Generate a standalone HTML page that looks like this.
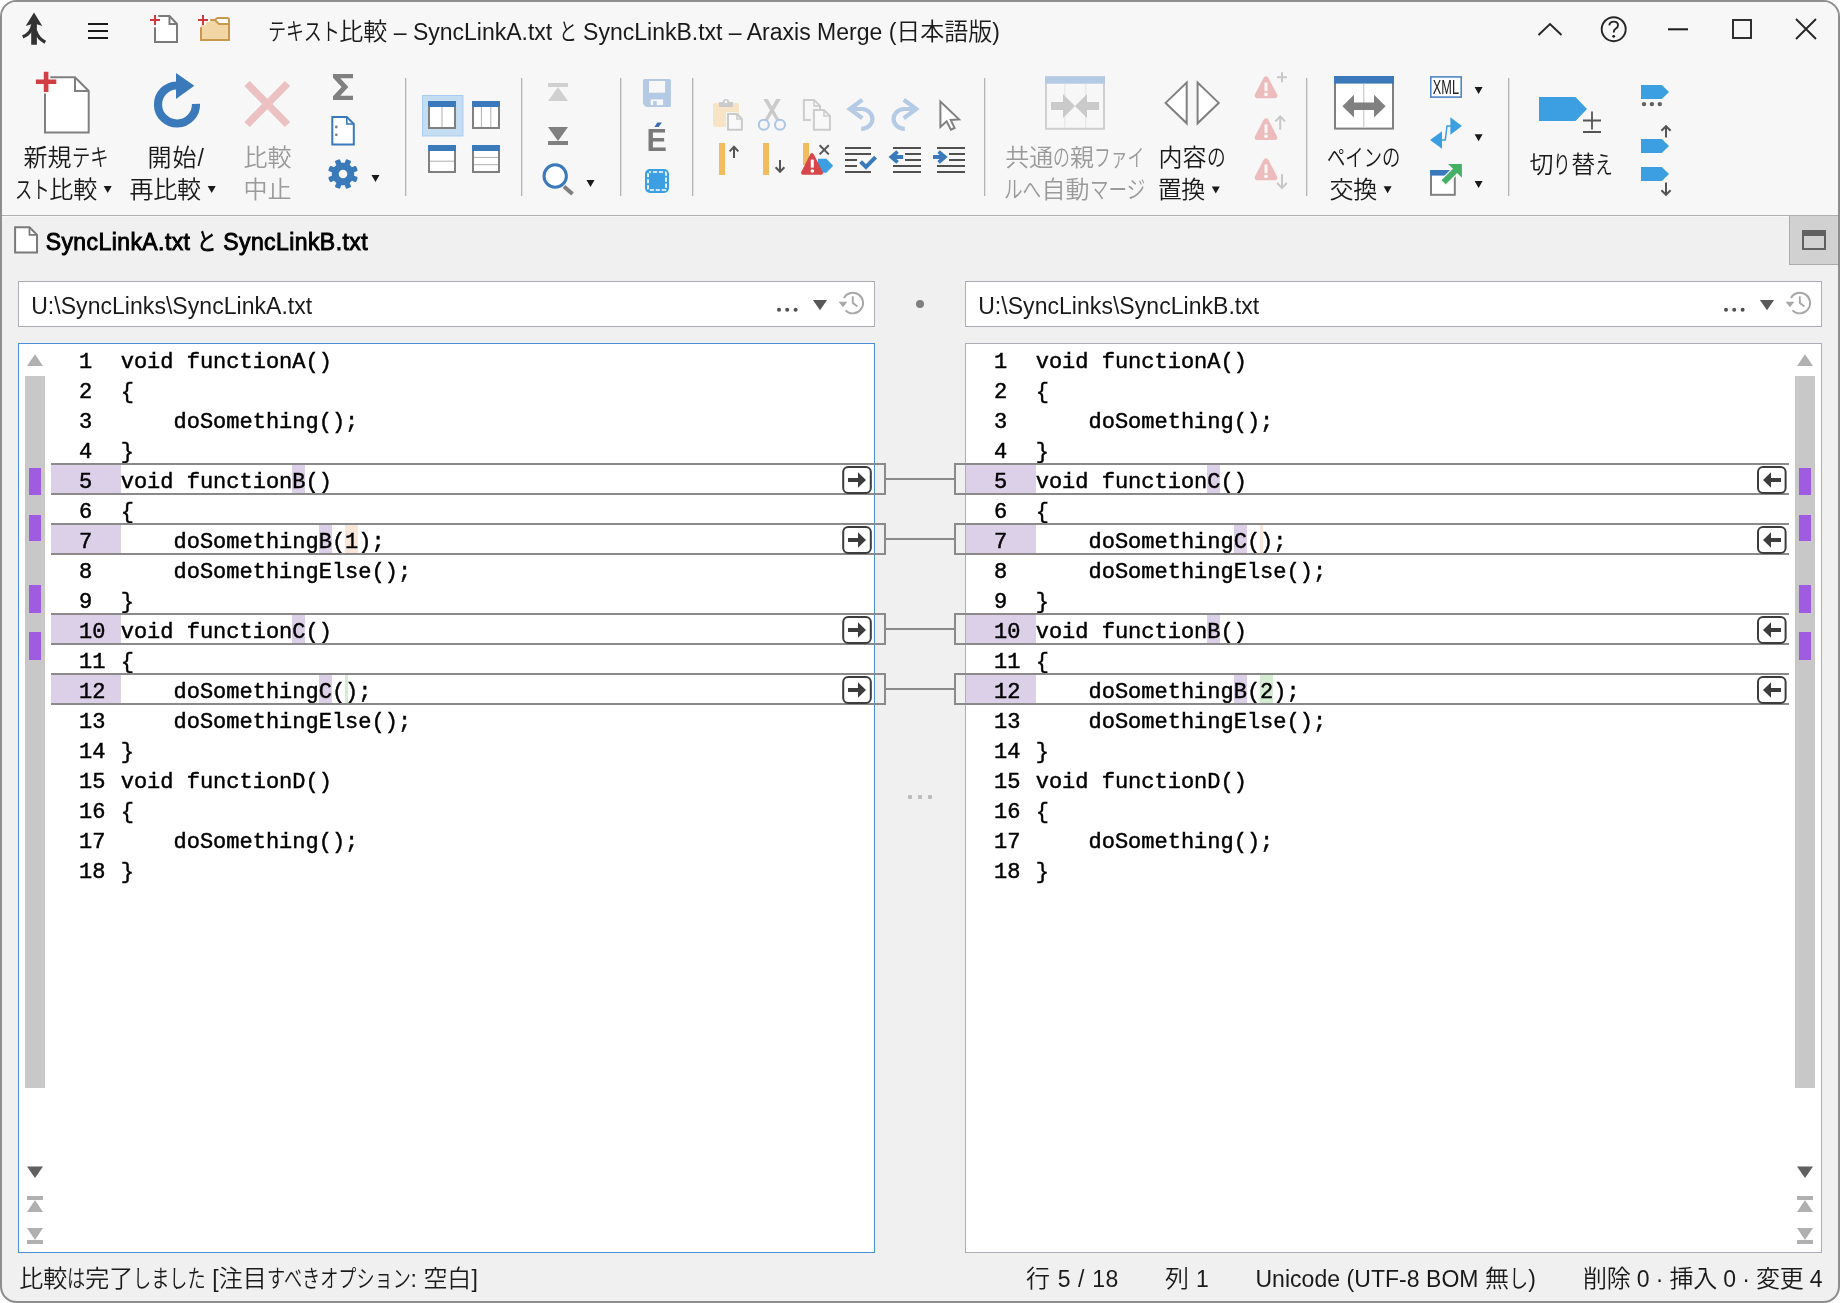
<!DOCTYPE html>
<html lang="ja"><head><meta charset="utf-8"><title>Araxis Merge</title>
<style>
*{box-sizing:border-box;margin:0;padding:0}
html,body{width:1840px;height:1303px;overflow:hidden;background:#fff}
body{font-family:"Liberation Sans","Noto Sans CJK JP",sans-serif;color:#1a1a1a;position:relative}
#win{position:absolute;left:0;top:0;width:1840px;height:1303px;border:2px solid #8e8e8e;border-radius:16.5px;background:#f0f0f0;overflow:hidden}
#ribbon{position:absolute;left:-2px;top:-2px;width:1840px;height:217px;background:#f7f7f7}
#ribline{position:absolute;left:-2px;top:213px;width:1840px;height:1px;background:#b0b0b0}
.abs{position:absolute}
.t{position:absolute;white-space:nowrap;font-size:23px;line-height:30px}
.la{font-size:23px}
.cj{font-size:24px;font-weight:350}
.kw{display:inline-block;height:30px;vertical-align:baseline;position:relative}
.ki{display:inline-block;transform-origin:0 50%;font-size:24px;font-weight:350;white-space:nowrap}
.lbl{position:absolute;white-space:nowrap;font-size:23px;line-height:30px;text-align:center;font-feature-settings:"palt";color:#1a1a1a}
.dis{color:#999}
.box{position:absolute;background:#fff;border:1px solid #adadb5}
.code{position:absolute;white-space:pre;font-family:"Liberation Mono","DejaVu Sans Mono",monospace;font-size:22px;line-height:30px;color:#000;height:30px;-webkit-text-stroke:0.45px #000}
.ln{position:absolute;white-space:pre;font-family:"Liberation Mono","DejaVu Sans Mono",monospace;font-size:22px;line-height:30px;color:#000;height:30px;-webkit-text-stroke:0.45px #000}
svg{position:absolute;left:0;top:0}
#page{position:absolute;left:0;top:0;width:1840px;height:1303px;will-change:transform}
</style></head>
<body>
<div id="page">
<div id="win"><div id="ribbon"></div><div id="ribline"></div></div>
<div class="abs" style="left:1789px;top:216px;width:49px;height:49px;background:#d1d1d1;border-left:1px solid #ababab;border-bottom:1px solid #ababab"></div>
<div class="box" style="left:18px;top:281px;width:857px;height:46px"></div>
<div class="box" style="left:965px;top:281px;width:857px;height:46px"></div>
<div class="box" style="left:18px;top:343px;width:857px;height:910px;border-color:#4a90d9"></div>
<div class="box" style="left:965px;top:343px;width:857px;height:910px;border-color:#adadb5"></div>
<div class="abs" style="left:25px;top:376px;width:20px;height:712px;background:#c8c8c8;"></div>
<div class="abs" style="left:1795px;top:376px;width:20px;height:712px;background:#c8c8c8;"></div>
<div class="abs" style="left:29px;top:468px;width:12px;height:27px;background:#a05ce0;"></div>
<div class="abs" style="left:1799px;top:468px;width:12px;height:27px;background:#a05ce0;"></div>
<div class="abs" style="left:29px;top:515px;width:12px;height:26px;background:#a05ce0;"></div>
<div class="abs" style="left:1799px;top:515px;width:12px;height:26px;background:#a05ce0;"></div>
<div class="abs" style="left:29px;top:585px;width:12px;height:28px;background:#a05ce0;"></div>
<div class="abs" style="left:1799px;top:585px;width:12px;height:28px;background:#a05ce0;"></div>
<div class="abs" style="left:29px;top:632px;width:12px;height:28px;background:#a05ce0;"></div>
<div class="abs" style="left:1799px;top:632px;width:12px;height:28px;background:#a05ce0;"></div>
<div class="ln" style="left:79.0px;top:348px">1</div><div class="code" style="left:120.7px;top:348px">void functionA()</div>
<div class="ln" style="left:79.0px;top:378px">2</div><div class="code" style="left:120.7px;top:378px">{</div>
<div class="ln" style="left:79.0px;top:408px">3</div><div class="code" style="left:120.7px;top:408px">    doSomething();</div>
<div class="ln" style="left:79.0px;top:438px">4</div><div class="code" style="left:120.7px;top:438px">}</div>
<div class="abs" style="left:51px;top:465px;width:70px;height:30px;background:#dccfe8;"></div>
<div class="abs" style="left:292.3px;top:465px;width:13.2px;height:30px;background:#dccfe8;"></div>
<div class="ln" style="left:79.0px;top:468px">5</div><div class="code" style="left:120.7px;top:468px">void functionB()</div>
<div class="ln" style="left:79.0px;top:498px">6</div><div class="code" style="left:120.7px;top:498px">{</div>
<div class="abs" style="left:51px;top:525px;width:70px;height:30px;background:#dccfe8;"></div>
<div class="abs" style="left:318.7px;top:525px;width:13.2px;height:30px;background:#dccfe8;"></div>
<div class="abs" style="left:345.1px;top:525px;width:13.2px;height:30px;background:#f8e6d8;"></div>
<div class="ln" style="left:79.0px;top:528px">7</div><div class="code" style="left:120.7px;top:528px">    doSomethingB(1);</div>
<div class="ln" style="left:79.0px;top:558px">8</div><div class="code" style="left:120.7px;top:558px">    doSomethingElse();</div>
<div class="ln" style="left:79.0px;top:588px">9</div><div class="code" style="left:120.7px;top:588px">}</div>
<div class="abs" style="left:51px;top:615px;width:70px;height:30px;background:#dccfe8;"></div>
<div class="abs" style="left:292.3px;top:615px;width:13.2px;height:30px;background:#dccfe8;"></div>
<div class="ln" style="left:79.0px;top:618px">10</div><div class="code" style="left:120.7px;top:618px">void functionC()</div>
<div class="ln" style="left:79.0px;top:648px">11</div><div class="code" style="left:120.7px;top:648px">{</div>
<div class="abs" style="left:51px;top:675px;width:70px;height:30px;background:#dccfe8;"></div>
<div class="abs" style="left:318.7px;top:675px;width:13.2px;height:30px;background:#dccfe8;"></div>
<div class="abs" style="left:345.1px;top:675px;width:3.3px;height:30px;background:#d6ecd2;"></div>
<div class="ln" style="left:79.0px;top:678px">12</div><div class="code" style="left:120.7px;top:678px">    doSomethingC();</div>
<div class="ln" style="left:79.0px;top:708px">13</div><div class="code" style="left:120.7px;top:708px">    doSomethingElse();</div>
<div class="ln" style="left:79.0px;top:738px">14</div><div class="code" style="left:120.7px;top:738px">}</div>
<div class="ln" style="left:79.0px;top:768px">15</div><div class="code" style="left:120.7px;top:768px">void functionD()</div>
<div class="ln" style="left:79.0px;top:798px">16</div><div class="code" style="left:120.7px;top:798px">{</div>
<div class="ln" style="left:79.0px;top:828px">17</div><div class="code" style="left:120.7px;top:828px">    doSomething();</div>
<div class="ln" style="left:79.0px;top:858px">18</div><div class="code" style="left:120.7px;top:858px">}</div>
<div class="abs" style="left:51px;top:463px;width:835px;height:2px;background:#8a8a8a;"></div>
<div class="abs" style="left:51px;top:493px;width:835px;height:2px;background:#8a8a8a;"></div>
<div class="abs" style="left:51px;top:523px;width:835px;height:2px;background:#8a8a8a;"></div>
<div class="abs" style="left:51px;top:553px;width:835px;height:2px;background:#8a8a8a;"></div>
<div class="abs" style="left:51px;top:613px;width:835px;height:2px;background:#8a8a8a;"></div>
<div class="abs" style="left:51px;top:643px;width:835px;height:2px;background:#8a8a8a;"></div>
<div class="abs" style="left:51px;top:673px;width:835px;height:2px;background:#8a8a8a;"></div>
<div class="abs" style="left:51px;top:703px;width:835px;height:2px;background:#8a8a8a;"></div>
<div class="ln" style="left:994.0px;top:348px">1</div><div class="code" style="left:1035.7px;top:348px">void functionA()</div>
<div class="ln" style="left:994.0px;top:378px">2</div><div class="code" style="left:1035.7px;top:378px">{</div>
<div class="ln" style="left:994.0px;top:408px">3</div><div class="code" style="left:1035.7px;top:408px">    doSomething();</div>
<div class="ln" style="left:994.0px;top:438px">4</div><div class="code" style="left:1035.7px;top:438px">}</div>
<div class="abs" style="left:966px;top:465px;width:70px;height:30px;background:#dccfe8;"></div>
<div class="abs" style="left:1207.3px;top:465px;width:13.2px;height:30px;background:#dccfe8;"></div>
<div class="ln" style="left:994.0px;top:468px">5</div><div class="code" style="left:1035.7px;top:468px">void functionC()</div>
<div class="ln" style="left:994.0px;top:498px">6</div><div class="code" style="left:1035.7px;top:498px">{</div>
<div class="abs" style="left:966px;top:525px;width:70px;height:30px;background:#dccfe8;"></div>
<div class="abs" style="left:1233.7px;top:525px;width:13.2px;height:30px;background:#dccfe8;"></div>
<div class="abs" style="left:1260.1px;top:525px;width:3.3px;height:30px;background:#f8e6d8;"></div>
<div class="ln" style="left:994.0px;top:528px">7</div><div class="code" style="left:1035.7px;top:528px">    doSomethingC();</div>
<div class="ln" style="left:994.0px;top:558px">8</div><div class="code" style="left:1035.7px;top:558px">    doSomethingElse();</div>
<div class="ln" style="left:994.0px;top:588px">9</div><div class="code" style="left:1035.7px;top:588px">}</div>
<div class="abs" style="left:966px;top:615px;width:70px;height:30px;background:#dccfe8;"></div>
<div class="abs" style="left:1207.3px;top:615px;width:13.2px;height:30px;background:#dccfe8;"></div>
<div class="ln" style="left:994.0px;top:618px">10</div><div class="code" style="left:1035.7px;top:618px">void functionB()</div>
<div class="ln" style="left:994.0px;top:648px">11</div><div class="code" style="left:1035.7px;top:648px">{</div>
<div class="abs" style="left:966px;top:675px;width:70px;height:30px;background:#dccfe8;"></div>
<div class="abs" style="left:1233.7px;top:675px;width:13.2px;height:30px;background:#dccfe8;"></div>
<div class="abs" style="left:1260.1px;top:675px;width:13.2px;height:30px;background:#d6ecd2;"></div>
<div class="ln" style="left:994.0px;top:678px">12</div><div class="code" style="left:1035.7px;top:678px">    doSomethingB(2);</div>
<div class="ln" style="left:994.0px;top:708px">13</div><div class="code" style="left:1035.7px;top:708px">    doSomethingElse();</div>
<div class="ln" style="left:994.0px;top:738px">14</div><div class="code" style="left:1035.7px;top:738px">}</div>
<div class="ln" style="left:994.0px;top:768px">15</div><div class="code" style="left:1035.7px;top:768px">void functionD()</div>
<div class="ln" style="left:994.0px;top:798px">16</div><div class="code" style="left:1035.7px;top:798px">{</div>
<div class="ln" style="left:994.0px;top:828px">17</div><div class="code" style="left:1035.7px;top:828px">    doSomething();</div>
<div class="ln" style="left:994.0px;top:858px">18</div><div class="code" style="left:1035.7px;top:858px">}</div>
<div class="abs" style="left:954px;top:463px;width:835px;height:2px;background:#8a8a8a;"></div>
<div class="abs" style="left:954px;top:493px;width:835px;height:2px;background:#8a8a8a;"></div>
<div class="abs" style="left:954px;top:523px;width:835px;height:2px;background:#8a8a8a;"></div>
<div class="abs" style="left:954px;top:553px;width:835px;height:2px;background:#8a8a8a;"></div>
<div class="abs" style="left:954px;top:613px;width:835px;height:2px;background:#8a8a8a;"></div>
<div class="abs" style="left:954px;top:643px;width:835px;height:2px;background:#8a8a8a;"></div>
<div class="abs" style="left:954px;top:673px;width:835px;height:2px;background:#8a8a8a;"></div>
<div class="abs" style="left:954px;top:703px;width:835px;height:2px;background:#8a8a8a;"></div>
<div class="abs" style="left:875px;top:465px;width:9px;height:28px;background:#f0f0f0;"></div>
<div class="abs" style="left:884px;top:463px;width:2px;height:32px;background:#8a8a8a;"></div>
<div class="abs" style="left:886px;top:478px;width:68px;height:2px;background:#8a8a8a;"></div>
<div class="abs" style="left:954px;top:463px;width:2px;height:32px;background:#8a8a8a;"></div>
<div class="abs" style="left:956px;top:465px;width:9px;height:28px;background:#f0f0f0;"></div>
<div class="abs" style="left:875px;top:525px;width:9px;height:28px;background:#f0f0f0;"></div>
<div class="abs" style="left:884px;top:523px;width:2px;height:32px;background:#8a8a8a;"></div>
<div class="abs" style="left:886px;top:538px;width:68px;height:2px;background:#8a8a8a;"></div>
<div class="abs" style="left:954px;top:523px;width:2px;height:32px;background:#8a8a8a;"></div>
<div class="abs" style="left:956px;top:525px;width:9px;height:28px;background:#f0f0f0;"></div>
<div class="abs" style="left:875px;top:615px;width:9px;height:28px;background:#f0f0f0;"></div>
<div class="abs" style="left:884px;top:613px;width:2px;height:32px;background:#8a8a8a;"></div>
<div class="abs" style="left:886px;top:628px;width:68px;height:2px;background:#8a8a8a;"></div>
<div class="abs" style="left:954px;top:613px;width:2px;height:32px;background:#8a8a8a;"></div>
<div class="abs" style="left:956px;top:615px;width:9px;height:28px;background:#f0f0f0;"></div>
<div class="abs" style="left:875px;top:675px;width:9px;height:28px;background:#f0f0f0;"></div>
<div class="abs" style="left:884px;top:673px;width:2px;height:32px;background:#8a8a8a;"></div>
<div class="abs" style="left:886px;top:688px;width:68px;height:2px;background:#8a8a8a;"></div>
<div class="abs" style="left:954px;top:673px;width:2px;height:32px;background:#8a8a8a;"></div>
<div class="abs" style="left:956px;top:675px;width:9px;height:28px;background:#f0f0f0;"></div>
<div class="t" id="title" style="left:267.5px;top:16.6px;color:#1a1a1a;"><span class="kw" style="width:71.84px"><span class="ki" style="transform:scaleX(0.7540)">テキスト</span></span><span class="cj" id="title_r1">比較</span><span class="la" id="title_r2"> – SyncLinkA.txt </span><span class="kw" style="width:18.10px"><span class="ki" style="transform:scaleX(0.7540)">と</span></span><span class="la" id="title_r4"> SyncLinkB.txt – Araxis Merge (</span><span class="cj" id="title_r5">日本語版</span><span class="la" id="title_r6">)</span></div>
<div class="t" id="tab" style="left:45.7px;top:227px;color:#000;letter-spacing:0.415px;-webkit-text-stroke:0.9px #000;"><span class="la" id="tab_r0">SyncLinkA.txt </span><span class="kw" style="width:19.20px"><span class="ki" style="transform:scaleX(0.8000)">と</span></span><span class="la" id="tab_r2"> SyncLinkB.txt</span></div>
<div class="t" id="pathL" style="left:31.200000000000003px;top:290.5px;color:#1a1a1a;letter-spacing:0.044px;"><span class="la" id="pathL_r0">U:\SyncLinks\SyncLinkA.txt</span></div>
<div class="t" id="pathR" style="left:978.2px;top:290.5px;color:#1a1a1a;letter-spacing:0.044px;"><span class="la" id="pathR_r0">U:\SyncLinks\SyncLinkB.txt</span></div>
<div class="t" id="st1" style="left:19.2px;top:1263.5px;color:#1a1a1a;"><span class="cj" id="st1_r0">比較</span><span class="kw" style="width:18.15px"><span class="ki" style="transform:scaleX(0.7561)">は</span></span><span class="cj" id="st1_r2">完了</span><span class="kw" style="width:72.59px"><span class="ki" style="transform:scaleX(0.7561)">しました</span></span><span class="la" id="st1_r4"> [</span><span class="cj" id="st1_r5">注目</span><span class="kw" style="width:143.91px"><span class="ki" style="transform:scaleX(0.7561)">すべきオプション</span></span><span class="la" id="st1_r7">: </span><span class="cj" id="st1_r8">空白</span><span class="la" id="st1_r9">]</span></div>
<div class="t" id="st2" style="left:1026px;top:1263.5px;color:#1a1a1a;letter-spacing:0.633px;"><span class="cj" id="st2_r0">行</span><span class="la" id="st2_r1"> 5 / 18</span></div>
<div class="t" id="st3" style="left:1165px;top:1263.5px;color:#1a1a1a;letter-spacing:0.271px;"><span class="cj" id="st3_r0">列</span><span class="la" id="st3_r1"> 1</span></div>
<div class="t" id="st4" style="left:1255.4px;top:1263.5px;color:#1a1a1a;letter-spacing:0.044px;"><span class="la" id="st4_r0">Unicode (UTF-8 BOM </span><span class="cj" id="st4_r1">無</span><span class="kw" style="width:19.20px"><span class="ki" style="transform:scaleX(0.8000)">し</span></span><span class="la" id="st4_r3">)</span></div>
<div class="t" id="st5" style="left:1582.9px;top:1263.5px;color:#1a1a1a;letter-spacing:-0.163px;"><span class="cj" id="st5_r0">削除</span><span class="la" id="st5_r1"> 0 · </span><span class="cj" id="st5_r2">挿入</span><span class="la" id="st5_r3"> 0 · </span><span class="cj" id="st5_r4">変更</span><span class="la" id="st5_r5"> 4</span></div>
<div class="t" id="l1a" style="left:23.5px;top:143px;color:#1a1a1a;"><span class="cj" id="l1a_r0">新規</span><span class="kw" style="width:36.50px"><span class="ki" style="transform:scaleX(0.7604)">テキ</span></span></div>
<div class="t" id="l1b" style="left:14.5px;top:174.5px;color:#1a1a1a;"><span class="kw" style="width:34.70px"><span class="ki" style="transform:scaleX(0.7229)">スト</span></span><span class="cj" id="l1b_r1">比較</span></div>
<div class="t" id="l2a" style="left:147.4px;top:143px;color:#1a1a1a;letter-spacing:1.036px;"><span class="cj" id="l2a_r0">開始</span><span class="la" id="l2a_r1">/</span></div>
<div class="t" id="l2b" style="left:129.5px;top:174.5px;color:#1a1a1a;letter-spacing:-0.267px;"><span class="cj" id="l2b_r0">再比較</span></div>
<div class="t" id="l3a" style="left:243.6px;top:143px;color:#9a9a9a;letter-spacing:-0.15px;"><span class="cj" id="l3a_r0">比較</span></div>
<div class="t" id="l3b" style="left:243.6px;top:174.5px;color:#9a9a9a;letter-spacing:-0.15px;"><span class="cj" id="l3b_r0">中止</span></div>
<div class="t" id="l4a" style="left:1005.2px;top:143px;color:#9a9a9a;"><span class="cj" id="l4a_r0">共通</span><span class="kw" style="width:16.80px"><span class="ki" style="transform:scaleX(0.7000)">の</span></span><span class="cj" id="l4a_r2">親</span><span class="kw" style="width:50.40px"><span class="ki" style="transform:scaleX(0.7000)">ファイ</span></span></div>
<div class="t" id="l4b" style="left:1004.3px;top:174.5px;color:#9a9a9a;"><span class="kw" style="width:37.22px"><span class="ki" style="transform:scaleX(0.7755)">ルへ</span></span><span class="cj" id="l4b_r1">自動</span><span class="kw" style="width:55.47px"><span class="ki" style="transform:scaleX(0.7755)">マージ</span></span></div>
<div class="t" id="l5a" style="left:1158.6px;top:143px;color:#1a1a1a;"><span class="cj" id="l5a_r0">内容</span><span class="kw" style="width:18.70px"><span class="ki" style="transform:scaleX(0.7792)">の</span></span></div>
<div class="t" id="l5b" style="left:1157.7px;top:174.5px;color:#1a1a1a;letter-spacing:-0.35px;"><span class="cj" id="l5b_r0">置換</span></div>
<div class="t" id="l6a" style="left:1327.3px;top:143px;color:#1a1a1a;"><span class="kw" style="width:73.30px"><span class="ki" style="transform:scaleX(0.7635)">ペインの</span></span></div>
<div class="t" id="l6b" style="left:1329.4px;top:174.5px;color:#1a1a1a;letter-spacing:-0.15px;"><span class="cj" id="l6b_r0">交換</span></div>
<div class="t" id="l7" style="left:1529.4px;top:150px;color:#1a1a1a;"><span class="cj" id="l7_r0">切</span><span class="kw" style="width:17.80px"><span class="ki" style="transform:scaleX(0.7417)">り</span></span><span class="cj" id="l7_r2">替</span><span class="kw" style="width:17.80px"><span class="ki" style="transform:scaleX(0.7417)">え</span></span></div>
<svg width="1840" height="1303" viewBox="0 0 1840 1303">
<g fill="#333"><path d="M34,12.6 L42.3,26 L36.9,24.2 L36.9,44.8 L31.2,44.8 L31.2,24.2 L25.7,26 Z"/></g>
<path d="M32.6,25 Q31.5,33.5 22.7,36.9" fill="none" stroke="#333" stroke-width="3.3"/>
<path d="M35.6,31 Q38,38.5 45.3,42.3" fill="none" stroke="#333" stroke-width="3.3"/>
<rect x="88" y="23" width="20" height="2" fill="#1a1a1a"/>
<rect x="88" y="30" width="20" height="2" fill="#1a1a1a"/>
<rect x="88" y="37" width="20" height="2" fill="#1a1a1a"/>
<path d="M155,27.2 V42 H177 V24 L169.5,16 H158.3" fill="#fff" stroke="none"/>
<path d="M155,27.2 V42 H177 V24 L169.5,16 H158.3" fill="none" stroke="#7a7a7a" stroke-width="2"/>
<path d="M169.5,16 V24 H177" fill="none" stroke="#7a7a7a" stroke-width="2"/>
<path d="M150,20 H160 M155,15 V25" stroke="#d0393e" stroke-width="2" fill="none"/>
<path d="M201,27.2 V40 H229 V19.5 Q229,18 227.5,18 H217 L214.5,20 H210 V22 H206 V25 H201 Z" fill="#f3d6a5"/>
<path d="M216.5,19 H228 V24 H219.5 L216,21 Z" fill="#fff"/>
<path d="M201,27.2 V40 H229 V19.8 Q229,18 227.2,18 H217.3 L214.8,20 H210.2" fill="none" stroke="#c8994a" stroke-width="2"/>
<path d="M214.8,20 L219,24 H229" fill="none" stroke="#c8994a" stroke-width="2"/>
<path d="M198,20 H208 M203,15 V25" stroke="#d0393e" stroke-width="2" fill="none"/>
<path d="M1538.5,35 L1550,24 L1561.5,35" fill="none" stroke="#262626" stroke-width="1.9"/>
<circle cx="1613.7" cy="29.2" r="12" fill="none" stroke="#262626" stroke-width="1.9"/>
<path d="M1609.3,25.4 Q1609.6,21.6 1613.8,21.6 Q1618,21.6 1618,25.2 Q1618,27.4 1615.6,28.8 Q1613.7,30 1613.7,32.4" fill="none" stroke="#262626" stroke-width="1.9"/>
<circle cx="1613.7" cy="36.3" r="1.4" fill="#1a1a1a"/>
<rect x="1668" y="28.3" width="20" height="2" fill="#1a1a1a"/>
<rect x="1733" y="20" width="18" height="18" fill="none" stroke="#262626" stroke-width="1.9"/>
<path d="M1796,19 L1816,39 M1816,19 L1796,39" fill="none" stroke="#262626" stroke-width="1.9"/>
<rect x="405" y="78" width="1.3" height="118" fill="#b4b4b4"/>
<rect x="521" y="78" width="1.3" height="118" fill="#b4b4b4"/>
<rect x="620" y="78" width="1.3" height="118" fill="#b4b4b4"/>
<rect x="692" y="78" width="1.3" height="118" fill="#b4b4b4"/>
<rect x="984" y="78" width="1.3" height="118" fill="#b4b4b4"/>
<rect x="1306" y="78" width="1.3" height="118" fill="#b4b4b4"/>
<rect x="1508" y="78" width="1.3" height="118" fill="#b4b4b4"/>
<path d="M45,93.4 V132.4 H88.7 V91 L75,77.3 H50.5 V93.4 Z" fill="#fff"/>
<path d="M45,93.4 V132.4 H88.7 V91 L75,77.3 H50.3" fill="none" stroke="#808080" stroke-width="2"/>
<path d="M75,77.3 V91 H88.7" fill="none" stroke="#808080" stroke-width="2"/>
<path d="M35.9,81.8 H56.3 M46.1,71.7 V91.9" stroke="#d13f44" stroke-width="4.6" fill="none"/>
<path d="M196,103.9 A19,19 0 1 1 176.5,85.5" fill="none" stroke="#3a7abb" stroke-width="8.2"/>
<path d="M176,73 L194.3,85.8 L176,99 Z" fill="#3a7abb"/>
<path d="M247,83.5 L287.5,124.5 M287.5,83.5 L247,124.5" stroke="#ecc1c1" stroke-width="7.4" fill="none"/>
<path d="M103.7,186 h8 l-4,7 z" fill="#1a1a1a"/>
<path d="M207.7,186 h8 l-4,7 z" fill="#1a1a1a"/>
<path d="M333,74 H353 V78.3 H340.3 L348.3,87 L340.3,95.7 H353 V100 H333 V96.3 L341.6,87 L333,77.7 Z" fill="#808080"/>
<path d="M332.3,117 H346.8 L353.8,124 V144.6 H332.3 Z" fill="#fff" stroke="#3a7abb" stroke-width="2"/>
<path d="M346.8,117 V124 H353.8" fill="none" stroke="#3a7abb" stroke-width="1.6"/>
<circle cx="336.3" cy="127" r="1.4" fill="#808080"/><circle cx="336.3" cy="134.8" r="1.4" fill="#808080"/>
<path d="M345.6,164.1 L346.9,160.7 L349.7,161.8 L348.1,165.2 L351.8,168.9 L355.2,167.3 L356.3,170.1 L352.9,171.4 L352.9,176.6 L356.3,177.9 L355.2,180.7 L351.8,179.1 L348.1,182.8 L349.7,186.2 L346.9,187.3 L345.6,183.9 L340.4,183.9 L339.1,187.3 L336.3,186.2 L337.9,182.8 L334.2,179.1 L330.8,180.7 L329.7,177.9 L333.1,176.6 L333.1,171.4 L329.7,170.1 L330.8,167.3 L334.2,168.9 L337.9,165.2 L336.3,161.8 L339.1,160.7 L340.4,164.1 Z M347.3,174 A4.3,4.3 0 1 0 338.7,174 A4.3,4.3 0 1 0 347.3,174 Z" fill="#3a7abb" fill-rule="evenodd"/>
<path d="M345.6,164.1 L346.9,160.7 L349.7,161.8 L348.1,165.2 L351.8,168.9 L355.2,167.3 L356.3,170.1 L352.9,171.4 L352.9,176.6 L356.3,177.9 L355.2,180.7 L351.8,179.1 L348.1,182.8 L349.7,186.2 L346.9,187.3 L345.6,183.9 L340.4,183.9 L339.1,187.3 L336.3,186.2 L337.9,182.8 L334.2,179.1 L330.8,180.7 L329.7,177.9 L333.1,176.6 L333.1,171.4 L329.7,170.1 L330.8,167.3 L334.2,168.9 L337.9,165.2 L336.3,161.8 L339.1,160.7 L340.4,164.1 Z" fill="none" stroke="#3a7abb" stroke-width="2.6" stroke-linejoin="round"/>
<path d="M371.5,175 h8 l-4,7 z" fill="#1a1a1a"/>
<rect x="422.5" y="95.5" width="40.5" height="40.5" fill="#c5ddf2" stroke="#a9cdf0" stroke-width="1"/>
<rect x="429" y="102" width="26" height="26" fill="#fff" stroke="#808080" stroke-width="2"/>
<rect x="428" y="101" width="28" height="6" fill="#3a7abb"/>
<rect x="441.5" y="107" width="1" height="20" fill="#b0b0b0"/>
<rect x="473" y="102" width="26" height="26" fill="#fff" stroke="#808080" stroke-width="2"/>
<rect x="472" y="101" width="28" height="6" fill="#3a7abb"/>
<rect x="480.9" y="107" width="1" height="20" fill="#b0b0b0"/>
<rect x="490.3" y="107" width="1" height="20" fill="#b0b0b0"/>
<rect x="429" y="146" width="26" height="26" fill="#fff" stroke="#808080" stroke-width="2"/>
<rect x="428" y="145" width="28" height="6" fill="#3a7abb"/>
<rect x="430" y="160.7" width="24" height="1" fill="#b0b0b0"/>
<rect x="473" y="146" width="26" height="26" fill="#fff" stroke="#808080" stroke-width="2"/>
<rect x="472" y="145" width="28" height="6" fill="#3a7abb"/>
<rect x="474" y="156.9" width="24" height="1" fill="#b0b0b0"/>
<rect x="474" y="164.2" width="24" height="1" fill="#b0b0b0"/>
<rect x="548" y="83" width="20" height="4" fill="#d0d0d0"/><path d="M548,101 L558,87 L568,101 Z" fill="#d0d0d0"/>
<path d="M548,127 L568,127 L558,141 Z" fill="#808080"/><rect x="548" y="141" width="20" height="4" fill="#808080"/>
<path d="M564,186.5 L572.5,194" stroke="#808080" stroke-width="4" fill="none"/>
<circle cx="555.2" cy="176" r="11.2" fill="#fff" stroke="#3a7abb" stroke-width="3"/>
<path d="M586.5,180 h8 l-4,7 z" fill="#1a1a1a"/>
<path d="M644.5,79 H669.4 Q670.9,79 670.9,80.5 V105.4 Q670.9,106.9 669.4,106.9 H646 L643,103.9 V80.5 Q643,79 644.5,79 Z" fill="#b4c9e3"/>
<rect x="649" y="81" width="16.1" height="11.7" fill="#f7f7f7"/>
<rect x="650.7" y="99.4" width="12.4" height="5.7" fill="#f7f7f7"/>
<rect x="653.1" y="101.1" width="3.6" height="4" fill="#b4c9e3"/>
<text x="646.4" y="151" font-family="Liberation Sans, sans-serif" font-weight="bold" font-size="30.5" fill="#7a7a7a">E</text>
<path d="M654.4,126.9 L657.4,122.4 H661.9 L658.6,126.9 Z" fill="#3a6cb0"/>
<rect x="645" y="169" width="24" height="24" rx="5" fill="#3b9fe2"/>
<rect x="648" y="172" width="18" height="18" rx="1" fill="none" stroke="#fff" stroke-width="1.7" stroke-dasharray="4.2,1.8" stroke-dashoffset="2.1"/>
<rect x="713" y="103" width="26" height="24" rx="2" fill="#f7e3c5"/>
<path d="M719,107 V102 H722.8 Q723,99 726,99 Q729,99 729.2,102 H733 V107 Z" fill="#cacaca"/>
<circle cx="726" cy="101.9" r="1.3" fill="#f7f7f7"/>
<path d="M726,112.2 H737.5 L743.8,118.5 V131.8 H726 Z" fill="#f7f7f7"/>
<path d="M728,114.1 H737 L741.9,119 V129.8 H728 Z" fill="#f9f9f9" stroke="#cacaca" stroke-width="2"/>
<path d="M737,114.1 V119 H741.9" fill="none" stroke="#cacaca" stroke-width="1.6"/>
<path d="M763.2,99 L767.8,99 L779.2,119.4 L776.3,120.8 Z" fill="#cacaca"/>
<path d="M780.8,99 L776.2,99 L764.8,119.4 L767.7,120.8 Z" fill="#cacaca"/>
<circle cx="763.8" cy="124.7" r="5" fill="none" stroke="#a9c6e4" stroke-width="2"/>
<circle cx="780" cy="124.7" r="5" fill="none" stroke="#a9c6e4" stroke-width="2"/>
<path d="M811,119.9 H803.9 V99.9 H814 L820,105.9 V109" fill="none" stroke="#cdcdcd" stroke-width="2"/>
<path d="M814,99.9 V105.9 H820" fill="none" stroke="#cdcdcd" stroke-width="1.6"/>
<path d="M813.9,110 H824 L830,116 V129.8 H813.9 Z" fill="#f8f8f8" stroke="#cdcdcd" stroke-width="2"/>
<path d="M824,110 V116 H830" fill="none" stroke="#cdcdcd" stroke-width="1.6"/>
<path d="M862.3,99.8 L849.8,109 L862.3,118.2" fill="none" stroke="#b5cbe5" stroke-width="4.2"/>
<path d="M851,109 H862 A10.8,9.9 0 0 1 861.2,128.8" fill="none" stroke="#b5cbe5" stroke-width="4.2"/>
<path d="M903.7,99.8 L916.2,109 L903.7,118.2" fill="none" stroke="#b5cbe5" stroke-width="4.2"/>
<path d="M915,109 H904 A10.8,9.9 0 0 0 904.8,128.8" fill="none" stroke="#b5cbe5" stroke-width="4.2"/>
<path d="M940.4,101.5 V127 L946.6,121.3 L950.9,129.6 L954.6,127.9 L950.7,119.9 L959,119.4 Z" fill="#fff" stroke="#808080" stroke-width="2" stroke-linejoin="miter"/>
<rect x="719" y="143" width="6" height="32" fill="#f2bc5e"/>
<path d="M734,158 V146.6 M729.6,151.4 L734,146.8 L738.4,151.4" fill="none" stroke="#555" stroke-width="2"/>
<rect x="763" y="143" width="6" height="32" fill="#f2bc5e"/>
<path d="M780,160 V171.8 M775.6,167.2 L780,171.8 L784.4,167.2" fill="none" stroke="#555" stroke-width="2"/>
<rect x="803" y="143" width="6" height="22" fill="#f2bc5e"/>
<path d="M817.9,158.8 H826.4 L833.2,165.8 L826.4,172.8 H817.9 Z" fill="#3b9fe2"/>
<path d="M812,155.2 L821,172.8 H803 Z" fill="#d5474a" stroke="#d5474a" stroke-width="4" stroke-linejoin="round"/>
<rect x="810.8" y="159.6" width="3" height="8" fill="#fff"/><circle cx="812.3" cy="171" r="1.8" fill="#fff"/>
<path d="M819.6,145.2 L828.8,154.4 M828.8,145.2 L819.6,154.4" stroke="#555" stroke-width="2" fill="none"/>
<rect x="845" y="147" width="26" height="2" fill="#505050"/>
<rect x="845" y="153" width="26" height="2" fill="#505050"/>
<rect x="845" y="159" width="12" height="2" fill="#505050"/>
<rect x="845" y="165" width="12" height="2" fill="#505050"/>
<rect x="845" y="171" width="26" height="2" fill="#505050"/>
<path d="M860.6,161.6 L866,167 L875.6,157.2" fill="none" stroke="#3a7abb" stroke-width="4"/>
<rect x="893" y="147" width="28" height="2" fill="#505050"/>
<rect x="905" y="153" width="16" height="2" fill="#505050"/>
<rect x="905" y="159" width="16" height="2" fill="#505050"/>
<rect x="893" y="165" width="28" height="2" fill="#505050"/>
<rect x="893" y="171" width="28" height="2" fill="#505050"/>
<path d="M897.6,151.6 L891.4,157 L897.6,162.4 M891.5,157 H903.2" fill="none" stroke="#3a7abb" stroke-width="3.8"/>
<rect x="937" y="147" width="28" height="2" fill="#505050"/>
<rect x="949" y="153" width="16" height="2" fill="#505050"/>
<rect x="949" y="159" width="16" height="2" fill="#505050"/>
<rect x="937" y="165" width="28" height="2" fill="#505050"/>
<rect x="937" y="171" width="28" height="2" fill="#505050"/>
<path d="M938.6,151.6 L944.8,157 L938.6,162.4 M944.7,157 H933" fill="none" stroke="#3a7abb" stroke-width="3.8"/>
<rect x="1046" y="77.3" width="58" height="51.5" fill="#f7f7f7" stroke="#d0d0d0" stroke-width="2"/>
<rect x="1045" y="76.3" width="60" height="7.4" fill="#b4c9e3"/>
<rect x="1064.3" y="83.7" width="1" height="44" fill="#e4e4e4"/><rect x="1085.2" y="83.7" width="1" height="44" fill="#e4e4e4"/>
<path d="M1051,102 H1063 V94 L1075,106 L1063,118 V110 H1051 Z" fill="#cacaca"/>
<path d="M1099,102 H1087 V94 L1075,106 L1087,118 V110 H1099 Z" fill="#cacaca"/>
<path d="M1186.7,82.5 V123.3 L1165.6,102.9 Z" fill="#fff" stroke="#808080" stroke-width="2"/>
<path d="M1197.6,82.5 V123.3 L1218.7,102.9 Z" fill="#fff" stroke="#808080" stroke-width="2"/>
<path d="M1211.8,186.5 h8 l-4,7 z" fill="#1a1a1a"/>
<path d="M1266,79.1 L1274.6,95.5 H1257.4 Z" fill="#ecbcbc" stroke="#ecbcbc" stroke-width="5.4" stroke-linejoin="round"/>
<rect x="1264.5" y="82.5" width="3" height="8.6" fill="#f7f7f7"/><circle cx="1266" cy="94.3" r="1.9" fill="#f7f7f7"/>
<path d="M1266,121.0 L1274.6,137.4 H1257.4 Z" fill="#ecbcbc" stroke="#ecbcbc" stroke-width="5.4" stroke-linejoin="round"/>
<rect x="1264.5" y="124.4" width="3" height="8.6" fill="#f7f7f7"/><circle cx="1266" cy="136.2" r="1.9" fill="#f7f7f7"/>
<path d="M1266,161.10000000000002 L1274.6,177.5 H1257.4 Z" fill="#ecbcbc" stroke="#ecbcbc" stroke-width="5.4" stroke-linejoin="round"/>
<rect x="1264.5" y="164.5" width="3" height="8.6" fill="#f7f7f7"/><circle cx="1266" cy="176.3" r="1.9" fill="#f7f7f7"/>
<path d="M1277,77.2 H1287 M1282,72.2 V82.2" stroke="#c8c8c8" stroke-width="2" fill="none"/>
<path d="M1280.2,129.8 V116.4 M1275.4,121.4 L1280.2,116.4 L1285,121.4" stroke="#c8c8c8" stroke-width="2" fill="none"/>
<path d="M1282,174.2 V188 M1277.2,183 L1282,188 L1286.8,183" stroke="#c8c8c8" stroke-width="2" fill="none"/>
<rect x="1335" y="77" width="58" height="51.6" fill="#fff" stroke="#808080" stroke-width="2"/>
<rect x="1334" y="76" width="60" height="7.6" fill="#3a7abb"/>
<rect x="1363.3" y="83.6" width="1" height="44" fill="#c0c0c0"/>
<path d="M1342.4,106.2 L1354,94.8 V102.4 H1374 V94.8 L1385.6,106.2 L1374,117.6 V110 H1354 V117.6 Z" fill="#808080"/>
<path d="M1383.6,186.3 h8 l-4,7 z" fill="#1a1a1a"/>
<rect x="1430.8" y="76.9" width="30.4" height="20.2" fill="#fff" stroke="#4f86c6" stroke-width="1.6"/>
<text x="1432.8" y="94" font-family="Liberation Sans, sans-serif" font-size="19.5" textLength="26.2" lengthAdjust="spacingAndGlyphs" fill="#222">XML</text>
<path d="M1474.6,87 h8 l-4,7 z" fill="#1a1a1a"/>
<path d="M1450.4,117.3 V134.8 L1461.9,126 Z" fill="#3b9fe2"/>
<path d="M1442,131.3 V148.8 L1430,140 Z" fill="#3b9fe2"/>
<path d="M1441.5,140 H1445.3 L1447,126 H1451" fill="none" stroke="#3b9fe2" stroke-width="1.5"/>
<path d="M1474.6,134.2 h8 l-4,7 z" fill="#1a1a1a"/>
<rect x="1431" y="171" width="23.8" height="23.8" fill="#fff" stroke="#808080" stroke-width="2"/>
<rect x="1430" y="170" width="25.8" height="5.6" fill="#3a7abb"/>
<path d="M1446.5,162.5 H1463.4 V179.4 L1458,174 L1446,186 L1440,180 L1452,168 Z" fill="#f7f7f7" opacity="0.95"/>
<path d="M1448.2,164 H1461.9 V177.7 L1457.1,172.9 L1445.7,184.3 L1441.6,180.2 L1453,168.8 Z" fill="#45b065"/>
<path d="M1474.6,181 h8 l-4,7 z" fill="#1a1a1a"/>
<path d="M1539,97 H1575.5 L1587,109 L1575.5,121 H1539 Z" fill="#3b9fe2"/>
<path d="M1583,120.5 H1601 M1592,111.5 V129.5 M1583,132 H1601" stroke="#555" stroke-width="1.8" fill="none"/>
<path d="M1641,85 H1661.8 L1669,92 L1661.8,99 H1641 Z" fill="#3b9fe2"/>
<path d="M1641,139 H1661.8 L1669,146 L1661.8,153 H1641 Z" fill="#3b9fe2"/>
<path d="M1641,167 H1661.8 L1669,174 L1661.8,181 H1641 Z" fill="#3b9fe2"/>
<circle cx="1644" cy="104.1" r="2.2" fill="#606060"/>
<circle cx="1651.9" cy="104.1" r="2.2" fill="#606060"/>
<circle cx="1659.8" cy="104.1" r="2.2" fill="#606060"/>
<path d="M1666,137.6 V126 M1661.4,130.8 L1666,126.2 L1670.6,130.8" stroke="#555" stroke-width="2" fill="none"/>
<path d="M1666,182.4 V195 M1661.4,190.2 L1666,194.8 L1670.6,190.2" stroke="#555" stroke-width="2" fill="none"/>
<path d="M15.1,227.3 H29.5 L37,234.8 V252.5 H15.1 Z" fill="#fff" stroke="#7a7a7a" stroke-width="2"/>
<path d="M29.5,227.3 V234.8 H37" fill="none" stroke="#7a7a7a" stroke-width="1.8"/>
<rect x="1803" y="231" width="22" height="18" fill="none" stroke="#606060" stroke-width="2"/>
<rect x="1802" y="230" width="24" height="6" fill="#606060"/>
<circle cx="779" cy="309.8" r="2" fill="#505050"/>
<circle cx="787.2" cy="309.8" r="2" fill="#505050"/>
<circle cx="795.6" cy="309.8" r="2" fill="#505050"/>
<path d="M812.9,300 H827.1 L820,310.2 Z" fill="#595959"/>
<path d="M843.9,297.9 A10.3,10.3 0 1 1 845.5,310.3" fill="none" stroke="#a8a8a8" stroke-width="1.9"/>
<path d="M838.6,301.8 H847.4 L843,307.2 Z" fill="#a8a8a8"/>
<path d="M852.8,296.2 V303 L857.5,306.4" fill="none" stroke="#a8a8a8" stroke-width="1.9"/>
<circle cx="1726" cy="309.8" r="2" fill="#505050"/>
<circle cx="1734.2" cy="309.8" r="2" fill="#505050"/>
<circle cx="1742.6" cy="309.8" r="2" fill="#505050"/>
<path d="M1759.9,300 H1774.1 L1767,310.2 Z" fill="#595959"/>
<path d="M1790.9,297.9 A10.3,10.3 0 1 1 1792.5,310.3" fill="none" stroke="#a8a8a8" stroke-width="1.9"/>
<path d="M1785.6,301.8 H1794.4 L1790,307.2 Z" fill="#a8a8a8"/>
<path d="M1799.8,296.2 V303 L1804.5,306.4" fill="none" stroke="#a8a8a8" stroke-width="1.9"/>
<circle cx="920" cy="304" r="4" fill="#808080"/>
<rect x="908" y="795" width="4" height="4" rx="0.8" fill="#bdbdbd"/>
<rect x="918" y="795" width="4" height="4" rx="0.8" fill="#bdbdbd"/>
<rect x="928" y="795" width="4" height="4" rx="0.8" fill="#bdbdbd"/>
<path d="M27,366 L35,354.2 L43,366 Z" fill="#b0b0b0"/>
<path d="M27,1166.4 H43 L35,1178 Z" fill="#606060"/>
<rect x="27" y="1196" width="16" height="4" fill="#b0b0b0"/><path d="M27,1212 L35,1200 L43,1212 Z" fill="#b0b0b0"/>
<path d="M27,1228 H43 L35,1240 Z" fill="#b0b0b0"/><rect x="27" y="1240" width="16" height="4" fill="#b0b0b0"/>
<path d="M1797,366 L1805,354.2 L1813,366 Z" fill="#b0b0b0"/>
<path d="M1797,1166.4 H1813 L1805,1178 Z" fill="#606060"/>
<rect x="1797" y="1196" width="16" height="4" fill="#b0b0b0"/><path d="M1797,1212 L1805,1200 L1813,1212 Z" fill="#b0b0b0"/>
<path d="M1797,1228 H1813 L1805,1240 Z" fill="#b0b0b0"/><rect x="1797" y="1240" width="16" height="4" fill="#b0b0b0"/>
<rect x="843.2" y="467" width="27.6" height="26" rx="5" fill="#fff" stroke="#3c3c3c" stroke-width="2"/>
<path d="M848,478 H858 V472.2 L866,480 L858,487.8 V482 H848 Z" fill="#3c3c3c"/>
<rect x="1758" y="467" width="27.6" height="26" rx="5" fill="#fff" stroke="#3c3c3c" stroke-width="2"/>
<path d="M1781,478 H1771 V472.2 L1763,480 L1771,487.8 V482 H1781 Z" fill="#3c3c3c"/>
<rect x="843.2" y="527" width="27.6" height="26" rx="5" fill="#fff" stroke="#3c3c3c" stroke-width="2"/>
<path d="M848,538 H858 V532.2 L866,540 L858,547.8 V542 H848 Z" fill="#3c3c3c"/>
<rect x="1758" y="527" width="27.6" height="26" rx="5" fill="#fff" stroke="#3c3c3c" stroke-width="2"/>
<path d="M1781,538 H1771 V532.2 L1763,540 L1771,547.8 V542 H1781 Z" fill="#3c3c3c"/>
<rect x="843.2" y="617" width="27.6" height="26" rx="5" fill="#fff" stroke="#3c3c3c" stroke-width="2"/>
<path d="M848,628 H858 V622.2 L866,630 L858,637.8 V632 H848 Z" fill="#3c3c3c"/>
<rect x="1758" y="617" width="27.6" height="26" rx="5" fill="#fff" stroke="#3c3c3c" stroke-width="2"/>
<path d="M1781,628 H1771 V622.2 L1763,630 L1771,637.8 V632 H1781 Z" fill="#3c3c3c"/>
<rect x="843.2" y="677" width="27.6" height="26" rx="5" fill="#fff" stroke="#3c3c3c" stroke-width="2"/>
<path d="M848,688 H858 V682.2 L866,690 L858,697.8 V692 H848 Z" fill="#3c3c3c"/>
<rect x="1758" y="677" width="27.6" height="26" rx="5" fill="#fff" stroke="#3c3c3c" stroke-width="2"/>
<path d="M1781,688 H1771 V682.2 L1763,690 L1771,697.8 V692 H1781 Z" fill="#3c3c3c"/>
</svg>
</div>
</body></html>
